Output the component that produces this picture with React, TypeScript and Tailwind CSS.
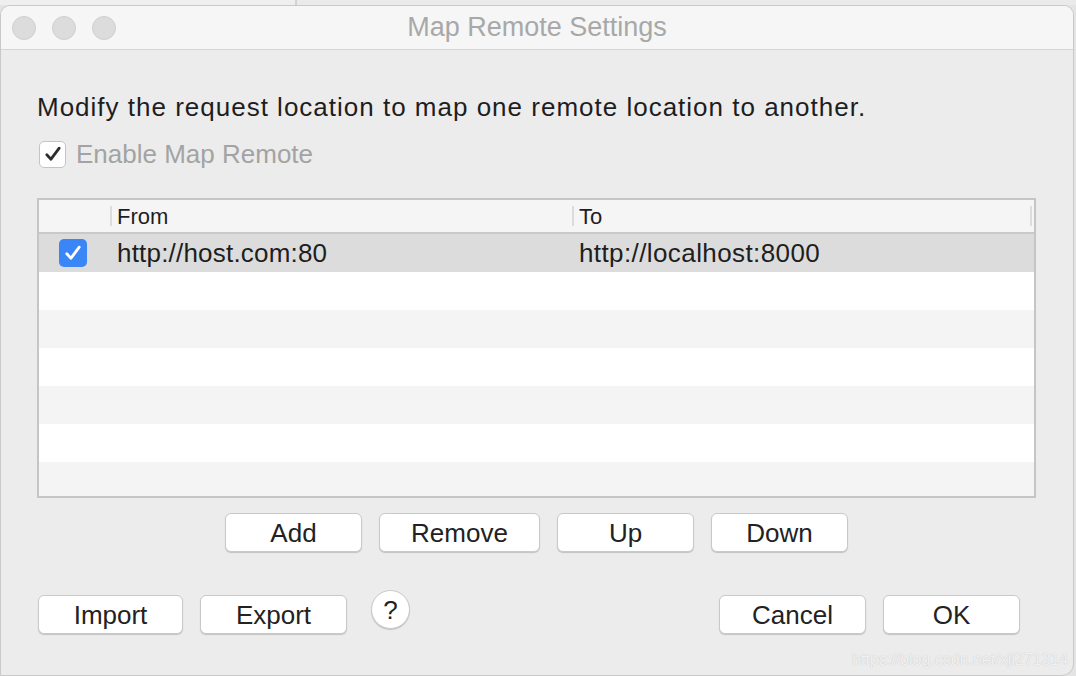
const FONT = { fontFamily: '"Liberation Sans", Arial, sans-serif' }

const Check = ({ color }: { color: string }) => (
  <svg viewBox="0 0 20 20" className="w-[20px] h-[20px]">
    <path d="M3.8 10.8 L8 15.2 L16.2 4.2" fill="none" stroke={color} strokeWidth="2.8" strokeLinecap="round" strokeLinejoin="round" />
  </svg>
)

const Button = ({ label, w }: { label: string; w: string }) => (
  <button
    className={`${w} h-[39px] bg-white rounded-[6px] border border-[#c9c9c9] shadow-[0_1px_1px_rgba(0,0,0,0.18)] text-[26px] text-[#222] flex items-center justify-center leading-none`}
  >
    {label}
  </button>
)

const ROW_BGS = ['bg-[#dcdcdc]', 'bg-white', 'bg-[#f4f4f4]', 'bg-white', 'bg-[#f4f4f4]', 'bg-white', 'bg-[#f4f4f4]']

export default function App() {
  return (
    <div className="w-[1076px] h-[676px] bg-[#e4e4e4] flex flex-col overflow-hidden relative" style={FONT}>
      {/* window behind */}
      <div className="h-[5px] flex shrink-0">
        <div className="w-[295px] bg-[#efefef]" />
        <div className="w-[2px] bg-[#d2d2d2]" />
        <div className="flex-1 bg-[#eaeaea]" />
      </div>

      {/* dialog */}
      <div className="w-[1074px] flex-1 flex flex-col bg-[#ececec] rounded-t-[10px] rounded-br-[12px] border border-[#c9c9c9] overflow-hidden">
        {/* title bar */}
        <div className="h-[44px] shrink-0 bg-[#f6f6f6] border-b border-[#d6d6d6] flex items-center relative">
          <div className="flex gap-[16px] pl-[11px]">
            <div className="w-[24px] h-[24px] rounded-full bg-[#dcdcdc] border border-[#cfcfcf]" />
            <div className="w-[24px] h-[24px] rounded-full bg-[#dcdcdc] border border-[#cfcfcf]" />
            <div className="w-[24px] h-[24px] rounded-full bg-[#dcdcdc] border border-[#cfcfcf]" />
          </div>
          <div className="absolute inset-0 flex items-center justify-center text-[27px] text-[#a8a8a8] pointer-events-none">
            Map Remote Settings
          </div>
        </div>

        {/* body */}
        <div className="flex flex-col pl-[36px] pr-[37px]">
          <div className="mt-[42px] h-[30px] flex items-center text-[26px] tracking-[1px] text-[#1e1e1e]">
            Modify the request location to map one remote location to another.
          </div>

          <div className="mt-[18px] h-[28px] flex items-center gap-[10px] pl-[2px]">
            <div className="w-[27px] h-[27px] bg-white rounded-[5px] border border-[#c4c4c4] flex items-center justify-center">
              <Check color="#2d2d2d" />
            </div>
            <span className="text-[26px] text-[#a3a3a3]">Enable Map Remote</span>
          </div>

          {/* table */}
          <div className="mt-[30px] h-[300px] border-2 border-[#c5c5c5] bg-white flex flex-col overflow-hidden">
            <div className="h-[34px] shrink-0 bg-[#f5f5f5] border-b-2 border-[#c9c9c9] flex items-center text-[22px] text-[#1e1e1e]">
              <div className="w-[71px] h-full" />
              <div className="w-[2px] h-[20px] bg-[#dcdcdc]" />
              <div className="w-[460px] pl-[5px]">From</div>
              <div className="w-[2px] h-[20px] bg-[#dcdcdc]" />
              <div className="flex-1 pl-[5px]">To</div>
              <div className="w-[2px] h-[20px] bg-[#dcdcdc] mr-[2px]" />
            </div>
            {ROW_BGS.map((bg, i) => (
              <div key={i} className={`h-[38px] shrink-0 flex items-center ${bg} text-[26px] text-[#1e1e1e]`}>
                {i === 0 && (
                  <>
                    <div className="w-[73px] flex justify-start pl-[20px]">
                      <div className="w-[28px] h-[28px] rounded-[5px] bg-[#3b86f7] flex items-center justify-center">
                        <Check color="#ffffff" />
                      </div>
                    </div>
                    <div className="w-[462px] pl-[5px] tracking-[0.2px]">http://host.com:80</div>
                    <div className="flex-1 pl-[5px] tracking-[0.4px]">http://localhost:8000</div>
                  </>
                )}
              </div>
            ))}
          </div>

          {/* table actions */}
          <div className="mt-[15px] flex justify-center gap-[17px]">
            <Button label="Add" w="w-[137px]" />
            <Button label="Remove" w="w-[161px]" />
            <Button label="Up" w="w-[137px]" />
            <Button label="Down" w="w-[137px]" />
          </div>

          {/* footer */}
          <div className="mt-[43px] flex items-start pl-[1px] pr-[16px]">
            <Button label="Import" w="w-[145px]" />
            <div className="w-[17px]" />
            <Button label="Export" w="w-[147px]" />
            <div className="ml-[24px] -mt-[5px] w-[39px] h-[39px] rounded-full bg-white border border-[#cacaca] shadow-[0_1px_1px_rgba(0,0,0,0.18)] flex items-center justify-center text-[26px] text-[#222] leading-none">
              ?
            </div>
            <div className="flex-1" />
            <Button label="Cancel" w="w-[147px]" />
            <div className="w-[17px]" />
            <Button label="OK" w="w-[137px]" />
          </div>
        </div>
      </div>

      {/* watermark */}
      <div className="absolute left-[852px] top-[648px] text-[16px] text-white/80 [text-shadow:0_0_1px_rgba(0,0,0,0.25)] whitespace-nowrap pointer-events-none">
        https://blog.csdn.net/xjl271314
      </div>
    </div>
  )
}
